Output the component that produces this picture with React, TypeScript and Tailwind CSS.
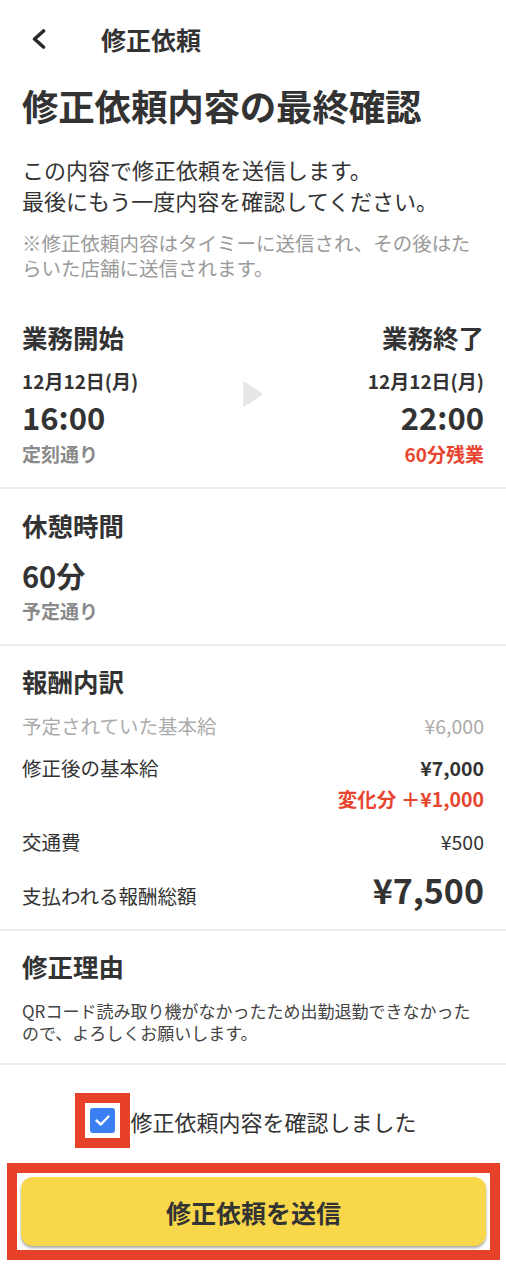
import React from 'react'

const font = "font-['Noto_Sans_CJK_JP','Noto_Sans',sans-serif]"

function Divider() {
  return <div className="h-[2px] bg-[#ececec]" />
}

export default function App() {
  return (
    <div className={`w-[506px] min-h-[1286px] bg-white text-[#333] ${font}`}>
      {/* ── Header ─────────────────────────────── */}
      <div className="h-[78px] flex items-center">
        <div className="w-[101px] pl-[31px]">
          <svg width="16" height="20" viewBox="0 0 16 20" fill="none">
            <polyline points="12.5,2 3.5,10 12.5,18" stroke="#2a2a2a" strokeWidth="3.6" strokeLinecap="round" strokeLinejoin="round" />
          </svg>
        </div>
        <span className="text-[25px] font-bold leading-[34px]">修正依頼</span>
      </div>

      <div className="px-[22px]">
        <h1 className="mt-[6px] text-[36.5px] font-bold leading-[44px] tracking-[-0.2px]">修正依頼内容の最終確認</h1>
        <p className="mt-[26px] text-[22px] leading-[31px]">
          この内容で修正依頼を送信します。<br />
          最後にもう一度内容を確認してください。
        </p>
        <p className="mt-[14px] text-[19.5px] leading-[25px] text-[#9a9a9a]">
          ※修正依頼内容はタイミーに送信され、その後はたらいた店舗に送信されます。
        </p>

        {/* ── Work time ──────────────────────────── */}
        <div className="mt-[40px] grid grid-cols-[1fr_auto_1fr] pb-[20px]">
          <div>
            <div className="text-[25.5px] font-bold leading-[34px]">業務開始</div>
            <div className="mt-[14px] text-[19px] font-bold leading-[26px]">12月12日(月)</div>
            <div className="mt-[5px] text-[31px] font-bold leading-[36px]">16:00</div>
            <div className="mt-[6px] text-[19px] font-bold leading-[26px] text-[#8a8a8a]">定刻通り</div>
          </div>
          <div className="pt-[61px]">
            <svg width="20" height="26" viewBox="0 0 20 26">
              <polygon points="1,1 19,13 1,25" fill="#e6e6e6" stroke="#e6e6e6" strokeWidth="1.5" strokeLinejoin="round" />
            </svg>
          </div>
          <div className="text-right">
            <div className="text-[25.5px] font-bold leading-[34px]">業務終了</div>
            <div className="mt-[14px] text-[19px] font-bold leading-[26px]">12月12日(月)</div>
            <div className="mt-[5px] text-[31px] font-bold leading-[36px]">22:00</div>
            <div className="mt-[6px] text-[19px] font-bold leading-[26px] text-[#e8452f]">60分残業</div>
          </div>
        </div>
      </div>
      <Divider />

      {/* ── Break ──────────────────────────────── */}
      <div className="px-[22px] pt-[19px] pb-[20px]">
        <div className="text-[25.5px] font-bold leading-[34px]">休憩時間</div>
        <div className="mt-[15px] text-[29px] font-bold leading-[36px]">60分</div>
        <div className="mt-[5px] text-[19px] font-bold leading-[26px] text-[#8a8a8a]">予定通り</div>
      </div>
      <Divider />

      {/* ── Pay breakdown ──────────────────────── */}
      <div className="px-[22px] pt-[18px] pb-[19px] text-[19.5px]">
        <div className="text-[25.5px] font-bold leading-[34px]">報酬内訳</div>
        <div className="mt-[15px] flex justify-between leading-[26px] text-[#ababab]">
          <span>予定されていた基本給</span>
          <span>¥6,000</span>
        </div>
        <div className="mt-[16px] flex justify-between leading-[26px]">
          <span>修正後の基本給</span>
          <span className="font-bold">¥7,000</span>
        </div>
        <div className="mt-[5px] text-right leading-[26px] font-bold text-[#e8452f]">変化分 ＋¥1,000</div>
        <div className="mt-[17px] flex justify-between leading-[26px]">
          <span>交通費</span>
          <span>¥500</span>
        </div>
        <div className="mt-[15px] flex justify-between items-baseline">
          <span className="leading-[26px]">支払われる報酬総額</span>
          <span className="text-[34px] font-bold leading-[40px]">¥7,500</span>
        </div>
      </div>
      <Divider />

      {/* ── Reason ─────────────────────────────── */}
      <div className="px-[22px] pt-[18px] pb-[19px]">
        <div className="text-[25.5px] font-bold leading-[34px]">修正理由</div>
        <p className="mt-[17px] text-[17px] leading-[22px] text-[#444]">
          QRコード読み取り機がなかったため出勤退勤できなかったので、よろしくお願いします。
        </p>
      </div>
      <Divider />

      {/* ── Confirm ────────────────────────────── */}
      <div className="mt-[28px] flex items-center justify-center pr-[14px]">
        <div className="border-[10px] border-[#e8412a] bg-white p-[5px]">
          <div className="w-[25px] h-[25px] rounded-[3px] bg-[#3b7ff5] flex items-center justify-center">
            <svg width="17" height="17" viewBox="0 0 17 17" fill="none">
              <polyline points="2.5,8.5 6.8,12.5 14.5,4.5" stroke="#fff" strokeWidth="2.4" strokeLinecap="round" strokeLinejoin="round" />
            </svg>
          </div>
        </div>
        <span className="text-[22px] leading-[30px] text-[#333]">修正依頼内容を確認しました</span>
      </div>

      <div className="mt-[15px] ml-[7px] mr-[6px] border-[10px] border-[#e8412a] p-[4px]">
        <button className="w-full h-[69px] rounded-[12px] bg-[#f8d84a] shadow-[0_2px_3px_rgba(0,0,0,0.35)] text-[25px] font-bold text-[#333] leading-[34px]">
          修正依頼を送信
        </button>
      </div>
    </div>
  )
}
